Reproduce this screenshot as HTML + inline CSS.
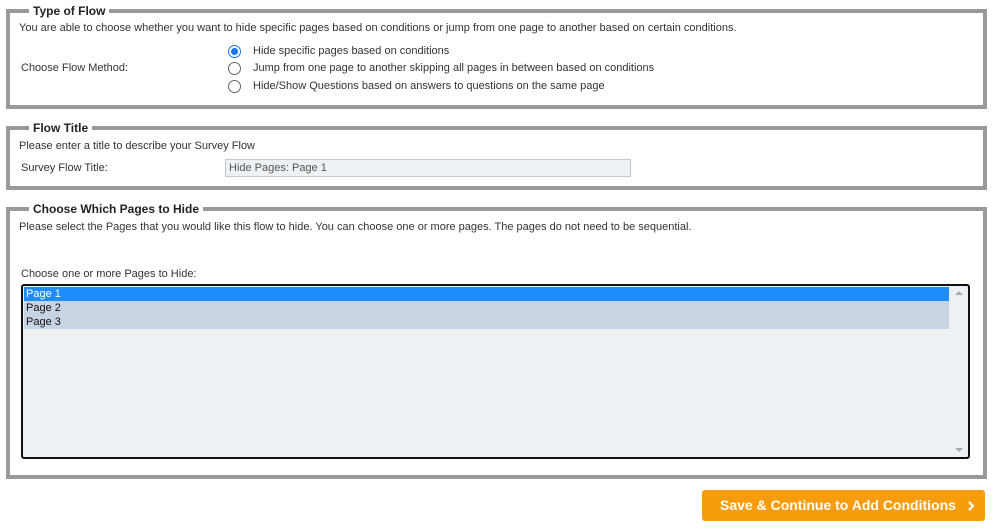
<!DOCTYPE html>
<html><head><meta charset="utf-8"><style>
*{box-sizing:border-box;margin:0;padding:0}
body{width:993px;height:530px;background:#fff;font-family:"Liberation Sans",Arial,sans-serif;font-size:11px;color:#333;position:relative;overflow:hidden}
.box{position:absolute;left:6px;width:981px;border:4px solid #999}
.lg{position:absolute;top:-9px;left:19px;background:#fff;padding:0 4px;font-weight:bold;font-size:12px;color:#222;line-height:14px}
.t{position:absolute;white-space:nowrap;line-height:13px}
.r{position:absolute;width:13px;height:13px;border:1px solid #666;border-radius:50%;background:#fff}
.r.on{border-color:#1a73e8}
.r.on::after{content:"";position:absolute;left:2px;top:2px;width:7px;height:7px;border-radius:50%;background:#1a73e8}
</style></head><body>
<div class="box" style="top:9px;height:100px"><div class="lg">Type of Flow</div></div>
<div class="t" style="left:19px;top:22px">You are able to choose whether you want to hide specific pages based on conditions or jump from one page to another based on certain conditions.</div>
<div class="t" style="left:21px;top:62px">Choose Flow Method:</div>
<div class="r on" style="left:228px;top:45px"></div>
<div class="r" style="left:228px;top:62px"></div>
<div class="r" style="left:228px;top:80px"></div>
<div class="t" style="left:253px;top:45px">Hide specific pages based on conditions</div>
<div class="t" style="left:253px;top:62px">Jump from one page to another skipping all pages in between based on conditions</div>
<div class="t" style="left:253px;top:80px">Hide/Show Questions based on answers to questions on the same page</div>

<div class="box" style="top:126px;height:64px"><div class="lg">Flow Title</div></div>
<div class="t" style="left:19px;top:140px">Please enter a title to describe your Survey Flow</div>
<div class="t" style="left:21px;top:162px">Survey Flow Title:</div>
<div style="position:absolute;left:225px;top:159px;width:406px;height:18px;border:1px solid #c4c8cc;background:#eef1f3;color:#555;padding:2px 0 0 3px;line-height:13px">Hide Pages: Page 1</div>

<div class="box" style="top:207px;height:272px"><div class="lg">Choose Which Pages to Hide</div></div>
<div class="t" style="left:19px;top:221px">Please select the Pages that you would like this flow to hide. You can choose one or more pages. The pages do not need to be sequential.</div>
<div class="t" style="left:21px;top:268px">Choose one or more Pages to Hide:</div>
<div style="position:absolute;left:21px;top:284px;width:949px;height:175px;border:2px solid #111;border-radius:3px;background:#eef1f3;overflow:hidden">
 <div style="position:absolute;left:1px;top:1px;width:925px;height:14px;background:#1e8cf9;color:#fff;padding-left:2px;line-height:14px">Page 1</div>
 <div style="position:absolute;left:1px;top:15px;width:925px;height:28px;background:#c8d4e3;color:#111;padding-left:2px;line-height:14px">Page 2<br>Page 3</div>
 <div style="position:absolute;right:5px;top:5px;width:0;height:0;border-left:4px solid transparent;border-right:4px solid transparent;border-bottom:4px solid #aaa"></div>
 <div style="position:absolute;right:5px;bottom:5px;width:0;height:0;border-left:4px solid transparent;border-right:4px solid transparent;border-top:4px solid #aaa"></div>
</div>

<div style="position:absolute;left:702px;top:490px;width:283px;height:31px;background:#f79c0c;border-radius:3px;color:#fff;font-weight:bold;font-size:14px;line-height:31px;padding-left:18px">Save &amp; Continue to Add Conditions
<svg style="position:absolute;right:10px;top:11px" width="8" height="10" viewBox="0 0 8 10"><path d="M2 1l4 4-4 4" stroke="#fff" stroke-width="2.2" fill="none"/></svg></div>
</body></html>
